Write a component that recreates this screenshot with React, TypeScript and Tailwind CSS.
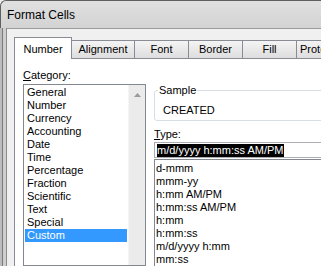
export default function App() {
  const cats = ["General", "Number", "Currency", "Accounting", "Date", "Time", "Percentage", "Fraction", "Scientific", "Text", "Special", "Custom"];
  const types = ["d-mmm", "mmm-yy", "h:mm AM/PM", "h:mm:ss AM/PM", "h:mm", "h:mm:ss", "m/d/yyyy h:mm", "mm:ss"];
  const tabs = [
    { label: "Alignment", w: "w-[64px]" },
    { label: "Font", w: "w-[55px]" },
    { label: "Border", w: "w-[55px]" },
    { label: "Fill", w: "w-[55px]" },
  ];
  return (
    <div className="w-[321px] h-[266px] overflow-hidden flex flex-col bg-[#f0f0f0] font-['Liberation_Sans',Arial,sans-serif] text-[11px] leading-[13px] text-black">
      <div className="h-[28px] shrink-0 rounded-tl-[6px] border-t border-l border-[#5f5f5f] bg-gradient-to-b from-[#e0e0e0] to-[#d3d3d3] pl-[6px] pt-[6px] text-[12px] leading-[16px]">
        Format Cells
      </div>
      <div className="flex flex-1 min-h-0">
        <div className="w-[7px] shrink-0 flex">
          <div className="w-[2px] bg-[#bdbdbd]" />
          <div className="w-[1px] bg-[#7a7a7a]" />
          <div className="w-[3px] bg-[#cfcfcf]" />
          <div className="w-[1px] bg-[#8c8c8c]" />
        </div>
        <div className="flex-1 min-w-0 flex flex-col pl-[7px] pt-[8px] border-t border-[#9c9c9c]">
          <div className="flex items-end h-[22px] -mb-px shrink-0">
            <div className="relative z-10 h-[22px] w-[58px] shrink-0 bg-white border border-b-0 border-[#898c95] flex items-end justify-center pb-[3px]">
              Number
            </div>
            {tabs.map((t) => (
              <div
                key={t.label}
                className={`h-[19px] ${t.w} shrink-0 -ml-px bg-gradient-to-b from-[#f4f4f4] to-[#dcdcdc] border border-b-0 border-[#898c95] flex items-end justify-center pb-[3px]`}
              >
                {t.label}
              </div>
            ))}
            <div className="h-[19px] w-[60px] -ml-px shrink-0 bg-gradient-to-b from-[#f4f4f4] to-[#dcdcdc] border border-b-0 border-[#898c95] flex items-end pl-[3px] pb-[3px]">
              Protection
            </div>
          </div>
          <div className="flex-1 min-h-0 bg-white border-l border-t border-[#898c95] flex pl-[8px] pt-[10px] gap-[8px] overflow-hidden">
            <div className="w-[123px] shrink-0 flex flex-col">
              <div>
                <span className="underline">C</span>ategory:
              </div>
              <div className="mt-[2px] flex-1 border border-[#828790] flex">
                <div className="w-[102px] ml-px mt-px">
                  {cats.map((c) => (
                    <div
                      key={c}
                      className={`h-[13px] pl-[2px] ${c === "Custom" ? "bg-[#3399ff] text-white" : ""}`}
                    >
                      {c}
                    </div>
                  ))}
                </div>
                <div className="w-[17px] ml-auto bg-[#ebebeb] border-l border-[#f5f5f5] flex justify-center">
                  <svg width="7" height="4" viewBox="0 0 7 4" className="mt-[8px]">
                    <path d="M3.5 0 L7 4 L0 4 Z" fill="#9a9a9a" />
                  </svg>
                </div>
              </div>
            </div>
            <div className="w-[200px] shrink-0 flex flex-col">
              <fieldset className="mt-[15px] border border-[#d5dfe5] rounded-[3px] pl-[8px] pt-[7px] pb-[3px]">
                <legend className="-ml-[5px] px-[1px]">Sample</legend>
                <div>CREATED</div>
              </fieldset>
              <div className="mt-[7px]">
                <span className="underline">T</span>ype:
              </div>
              <div className="mt-[1px] h-[19px] border border-[#abadb3] pl-[2px] pt-[1px]">
                <span className="inline-block bg-black text-white h-[13px] leading-[13px]">m/d/yyyy h:mm:ss AM/PM</span>
              </div>
              <div className="mt-[1px] flex-1 border border-[#828790] pt-[2px] pl-[1px]">
                {types.map((t) => (
                  <div key={t} className="h-[13px] whitespace-nowrap">
                    {t}
                  </div>
                ))}
              </div>
            </div>
          </div>
        </div>
      </div>
    </div>
  );
}
